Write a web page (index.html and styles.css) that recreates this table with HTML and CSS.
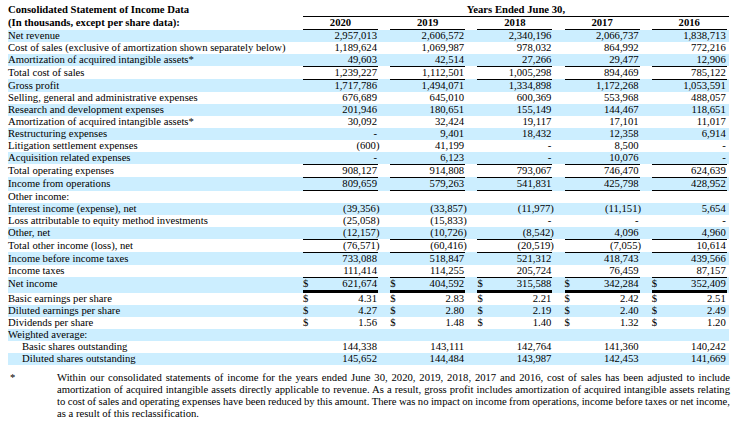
FILE: index.html
```html
<!DOCTYPE html>
<html lang="en">
<head>
<meta charset="utf-8">
<title>Consolidated Statement of Income Data</title>
<link rel="stylesheet" href="styles.css">
</head>
<body>
<div class="page">
<table class="fin">
<colgroup>
<col class="c-label">
<col class="c-d"><col class="c-n"><col class="c-g">
<col class="c-d"><col class="c-n"><col class="c-g">
<col class="c-d"><col class="c-n"><col class="c-g">
<col class="c-d"><col class="c-n"><col class="c-g">
<col class="c-d"><col class="c-n"><col class="c-g-last">
</colgroup>
<thead>
<tr class="h1"><th class="l">Consolidated Statement of Income Data</th><th colspan="15" class="span">Years Ended June 30,</th></tr>
<tr class="h2"><th class="l">(In thousands, except per share data):</th><th colspan="2" class="yr">2020</th><th></th><th colspan="2" class="yr">2019</th><th></th><th colspan="2" class="yr">2018</th><th></th><th colspan="2" class="yr">2017</th><th></th><th colspan="2" class="yr">2016</th><th></th></tr>
</thead>
<tbody>
<tr><td class="l">Net revenue</td><td class="d"></td><td class="n">2,957,013</td><td></td><td class="d"></td><td class="n">2,606,572</td><td></td><td class="d"></td><td class="n">2,340,196</td><td></td><td class="d"></td><td class="n">2,066,737</td><td></td><td class="d"></td><td class="n">1,838,713</td><td></td></tr>
<tr><td class="l">Cost of sales (exclusive of amortization shown separately below)</td><td class="d"></td><td class="n">1,189,624</td><td></td><td class="d"></td><td class="n">1,069,987</td><td></td><td class="d"></td><td class="n">978,032</td><td></td><td class="d"></td><td class="n">864,992</td><td></td><td class="d"></td><td class="n">772,216</td><td></td></tr>
<tr><td class="l">Amortization of acquired intangible assets*</td><td class="d"></td><td class="n">49,603</td><td></td><td class="d"></td><td class="n">42,514</td><td></td><td class="d"></td><td class="n">27,266</td><td></td><td class="d"></td><td class="n">29,477</td><td></td><td class="d"></td><td class="n">12,906</td><td></td></tr>
<tr class="bt"><td class="l">Total cost of sales</td><td class="d"></td><td class="n">1,239,227</td><td></td><td class="d"></td><td class="n">1,112,501</td><td></td><td class="d"></td><td class="n">1,005,298</td><td></td><td class="d"></td><td class="n">894,469</td><td></td><td class="d"></td><td class="n">785,122</td><td></td></tr>
<tr class="bt"><td class="l">Gross profit</td><td class="d"></td><td class="n">1,717,786</td><td></td><td class="d"></td><td class="n">1,494,071</td><td></td><td class="d"></td><td class="n">1,334,898</td><td></td><td class="d"></td><td class="n">1,172,268</td><td></td><td class="d"></td><td class="n">1,053,591</td><td></td></tr>
<tr><td class="l">Selling, general and administrative expenses</td><td class="d"></td><td class="n">676,689</td><td></td><td class="d"></td><td class="n">645,010</td><td></td><td class="d"></td><td class="n">600,369</td><td></td><td class="d"></td><td class="n">553,968</td><td></td><td class="d"></td><td class="n">488,057</td><td></td></tr>
<tr><td class="l">Research and development expenses</td><td class="d"></td><td class="n">201,946</td><td></td><td class="d"></td><td class="n">180,651</td><td></td><td class="d"></td><td class="n">155,149</td><td></td><td class="d"></td><td class="n">144,467</td><td></td><td class="d"></td><td class="n">118,651</td><td></td></tr>
<tr><td class="l">Amortization of acquired intangible assets*</td><td class="d"></td><td class="n">30,092</td><td></td><td class="d"></td><td class="n">32,424</td><td></td><td class="d"></td><td class="n">19,117</td><td></td><td class="d"></td><td class="n">17,101</td><td></td><td class="d"></td><td class="n">11,017</td><td></td></tr>
<tr><td class="l">Restructuring expenses</td><td class="d"></td><td class="n">-</td><td></td><td class="d"></td><td class="n">9,401</td><td></td><td class="d"></td><td class="n">18,432</td><td></td><td class="d"></td><td class="n">12,358</td><td></td><td class="d"></td><td class="n">6,914</td><td></td></tr>
<tr><td class="l">Litigation settlement expenses</td><td class="d"></td><td class="n">(600<span class="cp">)</span></td><td></td><td class="d"></td><td class="n">41,199</td><td></td><td class="d"></td><td class="n">-</td><td></td><td class="d"></td><td class="n">8,500</td><td></td><td class="d"></td><td class="n">-</td><td></td></tr>
<tr><td class="l">Acquisition related expenses</td><td class="d"></td><td class="n">-</td><td></td><td class="d"></td><td class="n">6,123</td><td></td><td class="d"></td><td class="n">-</td><td></td><td class="d"></td><td class="n">10,076</td><td></td><td class="d"></td><td class="n">-</td><td></td></tr>
<tr class="bt"><td class="l">Total operating expenses</td><td class="d"></td><td class="n">908,127</td><td></td><td class="d"></td><td class="n">914,808</td><td></td><td class="d"></td><td class="n">793,067</td><td></td><td class="d"></td><td class="n">746,470</td><td></td><td class="d"></td><td class="n">624,639</td><td></td></tr>
<tr class="bt bb"><td class="l">Income from operations</td><td class="d"></td><td class="n">809,659</td><td></td><td class="d"></td><td class="n">579,263</td><td></td><td class="d"></td><td class="n">541,831</td><td></td><td class="d"></td><td class="n">425,798</td><td></td><td class="d"></td><td class="n">428,952</td><td></td></tr>
<tr><td class="l">Other income:</td><td class="d"></td><td class="n"></td><td></td><td class="d"></td><td class="n"></td><td></td><td class="d"></td><td class="n"></td><td></td><td class="d"></td><td class="n"></td><td></td><td class="d"></td><td class="n"></td><td></td></tr>
<tr><td class="l">Interest income (expense), net</td><td class="d"></td><td class="n">(39,356<span class="cp">)</span></td><td></td><td class="d"></td><td class="n">(33,857<span class="cp">)</span></td><td></td><td class="d"></td><td class="n">(11,977<span class="cp">)</span></td><td></td><td class="d"></td><td class="n">(11,151<span class="cp">)</span></td><td></td><td class="d"></td><td class="n">5,654</td><td></td></tr>
<tr><td class="l">Loss attributable to equity method investments</td><td class="d"></td><td class="n">(25,058<span class="cp">)</span></td><td></td><td class="d"></td><td class="n">(15,833<span class="cp">)</span></td><td></td><td class="d"></td><td class="n">-</td><td></td><td class="d"></td><td class="n">-</td><td></td><td class="d"></td><td class="n">-</td><td></td></tr>
<tr><td class="l">Other, net</td><td class="d"></td><td class="n">(12,157<span class="cp">)</span></td><td></td><td class="d"></td><td class="n">(10,726<span class="cp">)</span></td><td></td><td class="d"></td><td class="n">(8,542<span class="cp">)</span></td><td></td><td class="d"></td><td class="n">4,096</td><td></td><td class="d"></td><td class="n">4,960</td><td></td></tr>
<tr class="bt"><td class="l">Total other income (loss), net</td><td class="d"></td><td class="n">(76,571<span class="cp">)</span></td><td></td><td class="d"></td><td class="n">(60,416<span class="cp">)</span></td><td></td><td class="d"></td><td class="n">(20,519<span class="cp">)</span></td><td></td><td class="d"></td><td class="n">(7,055<span class="cp">)</span></td><td></td><td class="d"></td><td class="n">10,614</td><td></td></tr>
<tr class="bt"><td class="l">Income before income taxes</td><td class="d"></td><td class="n">733,088</td><td></td><td class="d"></td><td class="n">518,847</td><td></td><td class="d"></td><td class="n">521,312</td><td></td><td class="d"></td><td class="n">418,743</td><td></td><td class="d"></td><td class="n">439,566</td><td></td></tr>
<tr><td class="l">Income taxes</td><td class="d"></td><td class="n">111,414</td><td></td><td class="d"></td><td class="n">114,255</td><td></td><td class="d"></td><td class="n">205,724</td><td></td><td class="d"></td><td class="n">76,459</td><td></td><td class="d"></td><td class="n">87,157</td><td></td></tr>
<tr class="bt bdbl"><td class="l">Net income</td><td class="d">$</td><td class="n">621,674</td><td></td><td class="d">$</td><td class="n">404,592</td><td></td><td class="d">$</td><td class="n">315,588</td><td></td><td class="d">$</td><td class="n">342,284</td><td></td><td class="d">$</td><td class="n">352,409</td><td></td></tr>
<tr><td class="l">Basic earnings per share</td><td class="d">$</td><td class="n">4.31</td><td></td><td class="d">$</td><td class="n">2.83</td><td></td><td class="d">$</td><td class="n">2.21</td><td></td><td class="d">$</td><td class="n">2.42</td><td></td><td class="d">$</td><td class="n">2.51</td><td></td></tr>
<tr><td class="l">Diluted earnings per share</td><td class="d">$</td><td class="n">4.27</td><td></td><td class="d">$</td><td class="n">2.80</td><td></td><td class="d">$</td><td class="n">2.19</td><td></td><td class="d">$</td><td class="n">2.40</td><td></td><td class="d">$</td><td class="n">2.49</td><td></td></tr>
<tr><td class="l">Dividends per share</td><td class="d">$</td><td class="n">1.56</td><td></td><td class="d">$</td><td class="n">1.48</td><td></td><td class="d">$</td><td class="n">1.40</td><td></td><td class="d">$</td><td class="n">1.32</td><td></td><td class="d">$</td><td class="n">1.20</td><td></td></tr>
<tr><td class="l">Weighted average:</td><td class="d"></td><td class="n"></td><td></td><td class="d"></td><td class="n"></td><td></td><td class="d"></td><td class="n"></td><td></td><td class="d"></td><td class="n"></td><td></td><td class="d"></td><td class="n"></td><td></td></tr>
<tr><td class="l ind">Basic shares outstanding</td><td class="d"></td><td class="n">144,338</td><td></td><td class="d"></td><td class="n">143,111</td><td></td><td class="d"></td><td class="n">142,764</td><td></td><td class="d"></td><td class="n">141,360</td><td></td><td class="d"></td><td class="n">140,242</td><td></td></tr>
<tr><td class="l ind">Diluted shares outstanding</td><td class="d"></td><td class="n">145,652</td><td></td><td class="d"></td><td class="n">144,484</td><td></td><td class="d"></td><td class="n">143,987</td><td></td><td class="d"></td><td class="n">142,453</td><td></td><td class="d"></td><td class="n">141,669</td><td></td></tr>
</tbody>
</table>
<div class="note">
<div class="star">*</div>
<p class="note-text">
<span class="ln">Within our consolidated statements of income for the years ended June 30, 2020, 2019, 2018, 2017 and 2016, cost of sales has been adjusted to include</span>
<span class="ln">amortization of acquired intangible assets directly applicable to revenue. As a result, gross profit includes amortization of acquired intangible assets relating</span>
<span class="ln">to cost of sales and operating expenses have been reduced by this amount. There was no impact on income from operations, income before taxes or net income,</span>
<span class="ln last">as a result of this reclassification.</span>
</p>
</div>
</div>
</body>
</html>
```

FILE: styles.css
```css
html, body {
  margin: 0;
  padding: 0;
  background: #ffffff;
}

body {
  font-family: "Liberation Serif", "Times New Roman", serif;
  font-size: 10.67px;
  color: #000000;
}

.page {
  padding: 4px 0 0 8px;
}

.fin {
  border-collapse: separate;
  border-spacing: 0;
  table-layout: fixed;
  width: 720.8px;
}

.c-label { width: 295px; }
.c-d { width: 10px; }
.c-n { width: 65px; }
.c-g { width: 12.2px; }
.c-g-last { width: 2px; }

.fin th,
.fin td {
  padding: 0 0 2px 0;
  line-height: 10px;
  vertical-align: baseline;
  white-space: nowrap;
  overflow: visible;
}

.fin th {
  font-weight: bold;
}

.fin .l {
  text-align: left;
}

.fin td.ind {
  padding-left: 14px;
}

.fin th.span {
  text-align: center;
  border-bottom: 1px solid #000;
}

.fin th.yr {
  text-align: center;
  border-bottom: 1px solid #000;
}

.fin td.d {
  text-align: left;
}

.fin td.n {
  text-align: right;
  padding-right: 1px;
}

.cp {
  margin-right: -2.5px;
}

.fin tbody tr:nth-child(odd) {
  background: #cceeff;
}

.fin tr.bt td.d,
.fin tr.bt td.n {
  border-top: 1px solid #000;
}

.fin tr.bb td.d,
.fin tr.bb td.n {
  border-bottom: 1px solid #000;
}

.fin tr.bdbl td.d,
.fin tr.bdbl td.n {
  border-bottom: 3px solid #000;
}

.note {
  display: flex;
  margin-top: 6px;
  line-height: 12.1px;
}

.star {
  width: 47px;
  padding-left: 2px;
  flex: none;
}

.note-text {
  margin: 0;
  width: 673px;
}

.ln {
  display: block;
  text-align: justify;
  text-align-last: justify;
  word-spacing: -1.2px;
}

.ln.last {
  text-align-last: left;
  word-spacing: 0;
}
```
